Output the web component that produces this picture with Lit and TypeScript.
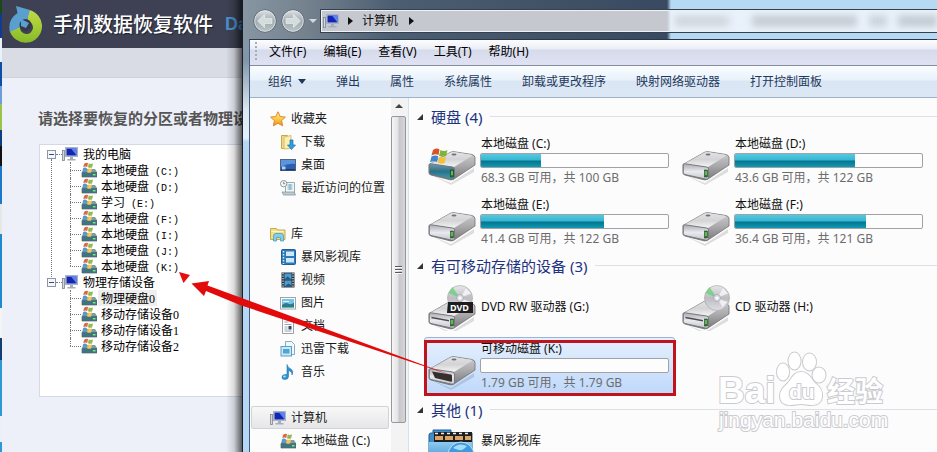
import { LitElement, html, svg, css, nothing, TemplateResult } from "lit";
import { customElement } from "lit/decorators.js";
import { classMap } from "lit/directives/class-map.js";
import { styleMap } from "lit/directives/style-map.js";

type Icon = () => TemplateResult;

const small = (body: TemplateResult) =>
  html`<svg class="i16" viewBox="0 0 16 16" aria-hidden="true">${body}</svg>`;
const large = (body: TemplateResult) =>
  html`<svg class="i48" viewBox="0 0 48 48" aria-hidden="true">${body}</svg>`;

const computer: Icon = () => small(svg`
  <rect x=".5" y="4.5" width="2" height="10" fill="#d5d9dc" stroke="#7c858d" stroke-width=".8"/>
  <rect x="3.5" y="1.5" width="12" height="9" fill="#c9d0dc" stroke="#aab3c4"/>
  <rect x="4.5" y="2.5" width="10" height="7" fill="#1424b4"/>
  <path d="M9 2.5h5.500v7z" fill="#5a84ec"/>
  <path d="M8 11h3v2h2.500v1.500h-8v-1.500H8z" fill="#a5adba"/>`);

const winDrive: Icon = () => small(svg`
  <path d="M1 10l3-3h10l2 3v5H1z" fill="#7f9ca6"/>
  <path d="M1 10.500h15v4.500H1z" fill="#3e7583" stroke="#55646b" stroke-width=".7"/>
  <rect x="12" y="12" width="2.500" height="1.500" fill="#6df06c"/>
  <path d="M3 2q2-2 4-1l-.7 4q-2-1-4 .3z" fill="#d96a45"/>
  <path d="M7.700 1.300q2 1.200 4.300 0l-.8 4q-2 1-4.200 0z" fill="#94b656"/>
  <path d="M2 6.200q2-1.200 4 0l-.7 4q-2-1-4 0z" fill="#5b97cf"/>
  <path d="M6.800 6.300q2 1 4.300 0l-.8 4q-2 1-4.200 0z" fill="#ecc955"/>`);

const star: Icon = () => small(svg`
  <path d="M8 .8l2.200 4.700 5.200.6-3.800 3.500 1 5.200L8 12.200l-4.600 2.600 1-5.200L.6 6.100l5.200-.6z" fill="url(#gold)" stroke="#dd8a2c"/>`);

const downloads: Icon = () => small(svg`
  <path d="M1.500 1.500h6l1 1.500v11.500h-7z" fill="#f1dc86" stroke="#c7a94c"/>
  <path d="M4 3l7-1.500v13L4 15z" fill="#faeeb0" stroke="#d0b45c" stroke-width=".8"/>
  <path d="M10 6h3v5h2.500l-4 4.500-4-4.500H10z" fill="#2f9fe0" stroke="#1b6fb0" stroke-width=".7"/>`);

const desktop: Icon = () => small(svg`
  <rect x=".5" y="2.500" width="15" height="11" fill="#2a5fb4" stroke="#53657c"/>
  <path d="M1 3h14v4Q8 6 1 10z" fill="#5c95dc"/>
  <path d="M1 12h14v1.500H1z" fill="#1b3a6c"/>
  <rect x="2" y="9.500" width="3.500" height="3" fill="#a9d4f5"/>`);

const recent: Icon = () => small(svg`
  <path d="M5.500 2.500h9v11h-9z" fill="#f2f7f9" stroke="#9aa8b0"/>
  <path d="M7.500 5h5M7.500 7h5M7.500 9h5M10 4v6" stroke="#6fa5bd" stroke-width=".9"/>
  <path d="M2 12h12l1.500 3H3.500z" fill="#c1cbd0" stroke="#8b979d" stroke-width=".8"/>
  <circle cx="3.700" cy="3.700" r="3.200" fill="#f7f9fa" stroke="#8e989e"/>
  <path d="M3.700 1.800v2h1.500" fill="none" stroke="#56646e" stroke-width=".8"/>`);

const library: Icon = () => small(svg`
  <path d="M.5 2.500h6l1 1.500h7.500v9.500H.5z" fill="#f3df86" stroke="#c5ab50"/>
  <path d="M1.500 5.500h12" stroke="#fff6c8"/>
  <path d="M3.500 15V10q0-2.500 2.500-2.500h5q2.500 0 2.500 2.500v5h-3v-3.500h-4V15z" fill="#86cdea" stroke="#4d9cc2" stroke-width=".8"/>`);

const filmBlue: Icon = () => small(svg`
  <rect x="1.500" y=".5" width="14" height="15" rx="1" fill="#2d7ab8" stroke="#215f94"/>
  <path d="M3.500 2v13" stroke="#d5ecfa" stroke-width="1.500" stroke-dasharray="1.500 1.500"/>
  <path d="M6 2.500h8v4.500H6zM6 9h8v4.500H6z" fill="#cfe8f8"/>`);

const film: Icon = () => small(svg`
  <rect x="1.500" y=".5" width="13" height="15" fill="#26323e"/>
  <path d="M3 1v14M13 1v14" stroke="#e6edf2" stroke-width="1.200" stroke-dasharray="1.300 1.200"/>
  <path d="M4.500 1.500h7v6h-7zM4.500 8.500h7v6h-7z" fill="#4b9bd0"/>
  <path d="M4.500 7.500l3-3 4 3zM4.500 14.500l4-3 3 2v1z" fill="#1f587f"/>`);

const picture: Icon = () => small(svg`
  <rect x=".5" y="2.500" width="15" height="11.500" fill="#fff" stroke="#9aa6ac"/>
  <rect x="2" y="4" width="12" height="8.500" fill="#78c4e2"/>
  <path d="M2 10q4-3 6-1.500T14 8v4.500H2z" fill="#2c7c86"/>
  <path d="M3 6.500h6" stroke="#e2f5fb"/>`);

const doc: Icon = () => small(svg`
  <path d="M2.500.5h8l3 3v12h-11z" fill="#fdfdfd" stroke="#98a1a7"/>
  <path d="M4.500 4h4M4.500 6.500h7M4.500 9h3M4.500 11h3M4.500 13h7" stroke="#94a4b4"/>
  <rect x="8.500" y="8" width="3" height="3.500" fill="#31435b"/>`);

const thunder: Icon = () => small(svg`
  <path d="M5.500.5h6l3 3v10h-9z" fill="#eff8fc" stroke="#86adbf"/>
  <rect x="1" y="5.500" width="10.500" height="9.500" fill="#cbe8f5" stroke="#5e9dbc"/>
  <rect x="3" y="8" width="6.500" height="4.500" fill="#4aa6d8"/>`);

const music: Icon = () => small(svg`
  <path d="M7 .5q.5 3 4 4.500 3 2 1 6 .3-3.500-3.500-4.500v6q-.2 3-3.500 3T2 13q0-2.500 3.500-2.500H7z" fill="#2e93d2" stroke="#2374b0" stroke-width=".6"/>
  <ellipse cx="4.500" cy="12.500" rx="1.500" ry="1" fill="#9bd7f4"/>`);

const driveBody = (front = "url(#front)") => svg`
  <path d="M3 38l20 8 23-15v4L23 48z" fill="#000" opacity=".12"/>
  <path d="M1 27.500L22 15.500q2-1 4-.8l18 2.800q3 1 3 3v7.500L26 42q-2 1.300-4 .8L3 38q-2-.6-2-2z" fill="url(#side)" stroke="#6e6e70" stroke-width=".8"/>
  <path d="M2 27L22 15.800q2-1 4-.8l17.500 2.700q1.500.6 0 1.600L26 30z" fill="url(#lid)"/>
  <path d="M1.300 27.500q0-1 2-.7L24.500 30q2 .3 2 2v8.500q0 2-2.500 1.700L3 37.500q-1.700-.5-1.700-2z" fill="${front}" stroke="#737377" stroke-width=".9"/>
  <ellipse cx="26" cy="17.500" rx="2.500" ry="1" fill="#6f7174"/>`;
const led = svg`<rect x="22.500" y="33" width="3" height="7" fill="#2f7b2c" stroke="#16351a" stroke-width=".5"/><rect x="23.500" y="34" width="1" height="4" fill="#93f37b"/>`;
const slot = svg`<path d="M3.500 31.500l17.500 3.300" stroke="#4d4d52" stroke-width="1.500"/>`;
const disc = (x: number, y: number, r: number) => svg`
  <circle cx="${x}" cy="${y}" r="${r}" fill="url(#disc)" stroke="#aaa" stroke-width=".7"/>
  <path d="M${x} ${y}l-${r - 1}-5 4-6z" fill="#62d274" opacity=".75"/>
  <path d="M${x} ${y}l6-${r - 3} 5 5z" fill="#fff" opacity=".7"/>
  <path d="M${x} ${y}l${r - 2} 4-5 5z" fill="#fff" opacity=".7"/>
  <circle cx="${x}" cy="${y}" r="3.500" fill="#d9dce6" stroke="#999" stroke-width=".6"/>
  <circle cx="${x}" cy="${y}" r="1.500" fill="#fff"/>`;

const drive: Icon = () => large(svg`${driveBody()}${led}`);
const systemDrive: Icon = () => large(svg`${driveBody("url(#teal)")}${led}
  <path d="M5 13q4-2.500 6.500-.5L10.500 18q-3-1.500-7 .5z" fill="#dd5126"/>
  <path d="M12.500 13q3.500 1.800 7 .2L18 19q-3.500 1.500-7-.2z" fill="#7db53c"/>
  <path d="M3.500 19.500q4-2 6.800-.3L9 25q-3.500-1.700-7 .3z" fill="#3f86d2"/>
  <path d="M11 19.800q3.500 1.700 7 .2L16.500 26q-3.500 1.500-6.700-.5z" fill="#f4c036"/>`);
const dvdDrive: Icon = () => large(svg`
  <g transform="translate(0 3)">${driveBody()}${led}${slot}</g>
  ${disc(32, 15, 12.500)}
  <path d="M20 19h25v11H19z" fill="#1d1d1f"/>
  <text class="dvd" x="22" y="28">DVD</text>`);
const cdDrive: Icon = () => large(svg`
  <g transform="translate(0 3)">${driveBody()}${led}${slot}</g>${disc(35, 15, 12.500)}`);
const usbDrive: Icon = () => large(svg`${driveBody()}
  <path d="M4 29.500l19 3q1 .2 1 1.500v5q0 1-1 .7L7 36z" fill="#35302f"/>`);
const filmFolder: Icon = () => large(svg`
  <path d="M1 6q0-2 2-2h2V1h18v3h21v44H1z" fill="#3f8ccb" stroke="#225d92"/>
  <rect x="6" y="3" width="38" height="10" fill="#1d1f22"/>
  <path d="M7 4.500h36" stroke="#eee" stroke-width="1.500" stroke-dasharray="3 3"/>
  <path d="M7 7h8v4H7zM17 7h8v4h-8zM27 7h8v4h-8zM37 7h6v4h-6z" fill="#dba565"/>
  <path d="M1 13h43v35H1z" fill="url(#blueFolder)"/>
  <circle cx="33" cy="26" r="13" fill="#3f9ade" stroke="#bfe3f8"/>
  <path d="M25 19q6-6 14-2-4 5-8 4t-6-2zM30 26q8-3 13 0-4 7-9 8z" fill="#a5dcf5"/>`);

interface TreeNode { name: string; ascii: string; digit?: boolean; selected?: boolean; }
const tree: { name: string; children: TreeNode[] }[] = [
  { name: "我的电脑", children: [
    { name: "本地硬盘", ascii: " (C:)" }, { name: "本地硬盘", ascii: " (D:)" },
    { name: "学习", ascii: " (E:)" }, { name: "本地硬盘", ascii: " (F:)" },
    { name: "本地硬盘", ascii: " (I:)" }, { name: "本地硬盘", ascii: " (J:)" },
    { name: "本地硬盘", ascii: " (K:)" } ] },
  { name: "物理存储设备", children: [
    { name: "物理硬盘", ascii: "0", digit: true, selected: true }, { name: "移动存储设备", ascii: "0", digit: true },
    { name: "移动存储设备", ascii: "1", digit: true }, { name: "移动存储设备", ascii: "2", digit: true } ] },
];

const places: { name: string; icon: Icon; current?: boolean; items: [string, Icon][] }[] = [
  { name: "收藏夹", icon: star, items: [["下载", downloads], ["桌面", desktop], ["最近访问的位置", recent]] },
  { name: "库", icon: library, items: [["暴风影视库", filmBlue], ["视频", film], ["图片", picture], ["文档", doc], ["迅雷下载", thunder], ["音乐", music]] },
  { name: "计算机", icon: computer, current: true, items: [["本地磁盘 (C:)", winDrive]] },
];

interface Device { name: string; icon: Icon; used?: number; info?: string; marked?: boolean; top?: boolean; }
const groups: { title: string; items: Device[] }[] = [
  { title: "硬盘 (4)", items: [
    { name: "本地磁盘 (C:)", icon: systemDrive, used: 32, info: "68.3 GB 可用，共 100 GB" },
    { name: "本地磁盘 (D:)", icon: drive, used: 64, info: "43.6 GB 可用，共 122 GB" },
    { name: "本地磁盘 (E:)", icon: drive, used: 66, info: "41.4 GB 可用，共 122 GB" },
    { name: "本地磁盘 (F:)", icon: drive, used: 70, info: "36.4 GB 可用，共 121 GB" } ] },
  { title: "有可移动存储的设备 (3)", items: [
    { name: "DVD RW 驱动器 (G:)", icon: dvdDrive },
    { name: "CD 驱动器 (H:)", icon: cdDrive },
    { name: "可移动磁盘 (K:)", icon: usbDrive, used: 0, info: "1.79 GB 可用，共 1.79 GB", marked: true } ] },
  { title: "其他 (1)", items: [{ name: "暴风影视库", icon: filmFolder, top: true }] },
];

@customElement("app-root")
export class AppRoot extends LitElement {
  static styles = css`
    :host { display: block; height: 100vh; overflow: hidden; position: relative;
      font: 12px/16px "Noto Sans", "Noto Sans CJK SC", sans-serif; color: #111; }
    * { box-sizing: border-box; }
    button { font: inherit; color: inherit; background: none; border: 0; padding: 0; margin: 0; white-space: nowrap; }
    a { color: inherit; text-decoration: none; }
    ul { list-style: none; margin: 0; padding: 0; }
    h1, h2, p { margin: 0; }
    svg { display: block; flex: none; }
    .i16 { width: 16px; height: 16px; }
    .i48 { width: 48px; height: 48px; }
    .defs { position: absolute; width: 0; height: 0; }
    .desk { display: flex; height: 100%; }

    .recovery { position: relative; flex: 0 0 242px; overflow: hidden; display: flex; }
    .recovery::after { content: ""; position: absolute; inset: 0 0 0 auto; width: 16px;
      background: linear-gradient(90deg, transparent, rgba(0,0,0,.14) 50%, rgba(0,0,0,.62)); }
    .strip { flex: 0 0 2px; background: linear-gradient(#174a18 0 14px, #123a8e 14px 38px, #e9f1fa 38px 62px, #0e4ea8 62px 86px,
      #6b9fd6 86px 104px, #9bc34a 104px 130px, #0d3f80 130px 146px, #111 146px 166px, #1c78c8 166px 204px, #e6e6e6 204px 234px,
      #1d8ad0 234px 308px, #f4f4f4 308px 338px, #123f70 338px 360px, #2b9ad4 360px 416px, #e9f0f8 416px 442px, #2b9ad4 442px); }
    .window { flex: 1; min-width: 0; background: #edf0f9; }
    .brand { display: flex; align-items: center; height: 48px; padding-left: 6px; background: #3d4153; color: #fff; white-space: nowrap; }
    .logo { width: 34px; height: 38px; margin-right: 11px; }
    .brand h1 { font: 500 20px/28px "Noto Sans CJK SC", sans-serif; text-shadow: 1px 1px 1px #1d2030; }
    .brand .en { margin-left: 12px; font: bold 18px/28px "Liberation Sans", sans-serif; color: #4b91cb; }
    .band { height: 30px; background: #dadce5; border-bottom: 1px solid #cfd2dc; }
    .prompt { padding: 28px 0 0 36px; font: bold 15px/24px "Noto Sans CJK SC", sans-serif; color: #555; white-space: nowrap; }
    .tree { margin: 14px 0 0 37px; height: 253px; padding: 1px 0 0 7px; background: #fff; border: 1px solid #d2dae8; border-right: 0;
      font: 12px/16px "Noto Sans CJK SC", sans-serif; color: #000; white-space: nowrap; }
    .branch { position: relative; }
    .branch:not(:last-child)::before { content: ""; position: absolute; left: 4px; top: 13px; bottom: -3px; border-left: 1px dotted #777; }
    .root { display: flex; align-items: center; height: 16px; }
    .fold { display: flex; align-items: center; justify-content: center; width: 9px; height: 9px; border: 1px solid #8b96a8; background: #f6f6f4; }
    .fold::before { content: ""; width: 5px; height: 1px; background: #2c49a0; }
    .dots { width: 6px; border-top: 1px dotted #777; }
    .name { height: 16px; padding: 0 2px 0 3px; margin-left: 2px; white-space: pre; }
    .kids { margin-left: 23px; }
    .kids .name { margin-left: 1px; }
    .kids li { position: relative; display: flex; align-items: center; height: 16px; }
    .kids li::before { content: ""; width: 11px; border-top: 1px dotted #777; }
    .kids li::after { content: ""; position: absolute; left: 0; top: 0; height: 16px; border-left: 1px dotted #777; }
    .kids li:last-child::after { height: 8px; }
    .kids .selected { background: #eee; }
    .mono { font: 10px/12px "Liberation Mono", monospace; }
    .digit { font: 12px/12px "Liberation Serif", serif; }

    .explorer { flex: 1; min-width: 0; display: flex; flex-direction: column; border-left: 1px solid #16202b;
      background: linear-gradient(#5e6c7c, #8998a5 30px, #8395a6 60px, #dbe7f1 110px, #e4eff9 138px, #b7d6f3 142px); }
    .glass { flex: none; display: flex; align-items: center; height: 39px; padding: 2px 0 0 10px;
      background: linear-gradient(90deg, #8796a3, #76838f 60px, #4c5e72 150px, #39495f 424px, #b7daf4 428px); }
    .nav { display: flex; gap: 4px; }
    .nav svg { width: 24px; height: 24px; border-radius: 12px; }
    .caret { border: 4px solid transparent; border-top-color: #d3dade; border-bottom: 0; margin: 0 3px 0 4px; }
    .address { flex: 1; min-width: 0; display: flex; align-items: center; height: 24px; padding-left: 2px; overflow: hidden;
      border: 1px solid #344150; border-right: 0; box-shadow: inset 1px 1px #eef2f5, inset 0 -1px #eef2f5;
      background: linear-gradient(90deg, #c5c8cf 346px, #e9f2fb 350px); }
    .crumb { margin: 0 11px 0 9px; }
    .chev { border: 4px solid transparent; border-left: 5px solid #111; border-right: 0; margin-left: 9px; }
    .chev.last { margin-left: 0; }
    .ghost { margin-left: auto; width: 262px; height: 12px; filter: blur(3px);
      background: linear-gradient(90deg, #d2d9e0 50px, transparent 58px 74px, #c8cfd6 80px 180px, transparent 184px 192px, #cdd5dc 196px 210px, transparent 214px 220px, #c5cdd5 226px); }
    .client { flex: 1; min-height: 0; display: flex; flex-direction: column; margin-left: 6px; border-left: 1px solid #3c5c85; border-top: 1px solid #27384c; background: #fcfcfc; }
    .menu { flex: none; display: flex; align-items: center; gap: 17px; height: 26px; padding: 0 0 2px 5px; color: #000;
      background: linear-gradient(#fdfdfe, #e9edf6 9px, #d6dbec 10px, #dfe2f2); border-bottom: 1px solid #848b9d; }
    .grip { width: 2px; height: 20px; margin-right: -5px; background: repeating-linear-gradient(#a5acba 0 2px, transparent 2px 4px); }
    .tools { flex: none; display: flex; align-items: center; gap: 30px; height: 32px; padding-left: 18px; color: #1e395b;
      background: linear-gradient(#fafdff, #e8f1fb 14px, #dbe6f4 15px, #dce7f5); border-bottom: 1px solid #9fb0c9; }
    .org { display: flex; align-items: center; gap: 6px; }
    .org::after { content: ""; border: 4px solid transparent; border-top: 5px solid #1e395b; border-bottom: 0; }
    .body { flex: 1; min-height: 0; display: flex; }
    .side { flex: 0 0 141px; padding-top: 9px; overflow: hidden; color: #1a1a1a; }
    .side ul { margin-bottom: 23px; }
    .side a { display: flex; align-items: center; gap: 5px; height: 23px; padding-left: 30px; white-space: nowrap; }
    .side .head { padding-left: 20px; }
    .side .current { margin: 0 2px 0 1px; padding-left: 18px; border: 1px solid #d3d3d6; border-radius: 2px; background: linear-gradient(#f8f8f8, #e6e6e8); }
    .scroll { flex: 0 0 18px; display: flex; flex-direction: column; border-right: 1px solid #d5e1ee; padding: 6px 2px 0 0; background: #f3f3f4; align-items: stretch; }
    .up { align-self: center; border: 4px solid transparent; border-top: 0; border-bottom: 4px solid #444; margin-bottom: 8px; }
    .thumb { display: flex; align-items: center; justify-content: center; height: 307px; border: 1px solid #96979a; border-radius: 2px;
      background: linear-gradient(90deg, #f5f5f5, #e4e4e6 45%, #c6c7cb 55%, #d5d6d9); }
    .thumb::before { content: ""; width: 7px; height: 8px; background: repeating-linear-gradient(#55585e 0 1px, #fff 1px 2px, transparent 2px 3px); }
    .main { flex: 1; min-width: 0; padding: 5px 0 0 15px; overflow: hidden; }
    .group h2 { display: flex; align-items: center; gap: 8px; height: 27px; margin-left: -7px; font: 15px/24px "Noto Sans", "Noto Sans CJK SC", sans-serif; color: #1e3380; white-space: nowrap; }
    .group h2::before { content: ""; border: 3px solid transparent; border-right-color: #333; border-bottom-color: #333; }
    .group h2::after { content: ""; flex: 1; height: 1px; background: #dfe0e6; }
    .tiles { display: grid; grid-template-columns: 254px 254px; }
    .tile { position: relative; display: flex; align-items: center; gap: 4px; height: 61px; padding-left: 4px; }
    .tile.plain { height: 56px; }
    .tile.top { align-items: flex-start; padding-top: 6px; }
    .tile.top p { margin-top: 4px; }
    .tile.marked::before { content: ""; position: absolute; inset: 2px 3px 0 0; border: 1px solid #9ab5d8; border-radius: 3px; background: linear-gradient(#e6f0fd, #bed8fb); }
    .tile.marked::after { content: ""; position: absolute; inset: 5px 2px 0 0; border: 3px solid #c0141c; }
    .tile > * { position: relative; }
    .label { white-space: nowrap; }
    .info { color: #6c6c6c; margin-top: 1px; padding-left: 1px; }
    .label p:first-child { padding-left: 1px; }
    .bar { width: 189px; height: 15px; margin-top: 1px; margin-bottom: 2px; border: 1px solid #a2a2a6; border-radius: 2px; background: #fdfdfd; overflow: hidden; }
    .fill { height: 100%; background: linear-gradient(#57c8de, #36b6d2 6px, #05748f 7px, #109ab3); }
    .dvd { font: bold 9px "Noto Sans", sans-serif; fill: #fff; }

    .arrow { position: absolute; left: 170px; top: 262px; width: 290px; height: 120px; pointer-events: none; }
    .mark { position: absolute; left: 715px; top: 345px; width: 176px; height: 90px; pointer-events: none; fill: #fff; stroke: #cbcbcf; stroke-width: 2; paint-order: stroke; }
    .bai { font: bold 37px "Liberation Sans", sans-serif; }
    .du { font: bold 21px "Liberation Sans", sans-serif; }
    .jy { font: bold 28px "Noto Sans CJK SC", sans-serif; }
    .url { font: 21px "Liberation Sans", sans-serif; }
  `;

  private defs() {
    const grad = (id: string, a: string, b: string, c: string) => svg`
      <linearGradient id=${id} x1="0" y1="0" x2="0" y2="1"><stop offset="0" stop-color=${a}/><stop offset=".5" stop-color=${b}/><stop offset="1" stop-color=${c}/></linearGradient>`;
    return html`<svg class="defs" aria-hidden="true"><defs>
      ${grad("gold", "#fff0a0", "#fccb45", "#f08a24")}
      ${grad("side", "#cfcfd0", "#a9a9ac", "#77777a")}
      ${grad("lid", "#e2e2e4", "#d4d4d6", "#f4f4f4")}
      ${grad("front", "#a9a9b0", "#e9e9f0", "#c6c6cd")}
      ${grad("teal", "#6f9aab", "#2b7188", "#3aa0b4")}
      ${grad("disc", "#e8e8ec", "#bcbcc2", "#dedee4")}
      ${grad("blueFolder", "#8fcbf0", "#4597d8", "#2f7fc4")}
      ${grad("orb", "#dfe4e6", "#a1abb0", "#b9c6c6")}
      ${grad("lime", "#c3d94a", "#a5cc35", "#87b92a")}
    </defs></svg>`;
  }

  private recovery() {
    return html`<section class="recovery">
      <div class="strip"></div>
      <div class="window">
        <header class="brand">
          <svg class="logo" viewBox="0 0 34 38" aria-hidden="true">
            <path d="M21 5A16.500 16.500 0 1 1 1.500 25L12 22a6.500 6.500 0 1 0 7-6z" fill="url(#lime)"/>
            <path d="M8 1l14 4-3 10q-6 0-7.500 7.500L2 27Q-1 15 9.500 8z" fill="#5b9fd0"/>
            <circle cx="17.500" cy="20" r="6" fill="#34394a"/>
            <path d="M13 14l8 4-3 5-5-2z" fill="#5b9fd0"/>
          </svg>
          <h1>手机数据恢复软件</h1><span class="en">Da</span>
        </header>
        <div class="band"></div>
        <p class="prompt">请选择要恢复的分区或者物理设</p>
        <div class="tree">
          ${tree.map((b) => html`<div class="branch">
            <div class="root"><button class="fold" aria-label="折叠"></button><span class="dots"></span>${computer()}<span class="name">${b.name}</span></div>
            <ul class="kids">${b.children.map((k) => html`<li>${winDrive()}<span class=${classMap({ name: true, selected: !!k.selected })}>${k.name}<span class=${k.digit ? "digit" : "mono"}>${k.ascii}</span></span></li>`)}</ul>
          </div>`)}
        </div>
      </div>
    </section>`;
  }

  private orb(flip: boolean) {
    return html`<button aria-label=${flip ? "前进" : "后退"}><svg viewBox="0 0 24 24" aria-hidden="true">
      <circle cx="12" cy="12" r="11.300" fill="url(#orb)" stroke="#596773"/>
      <circle cx="12" cy="12" r="10.300" fill="none" stroke="#dfe5e8" stroke-width=".8"/>
      <path transform=${flip ? "rotate(180 12 12)" : "rotate(0)"} d="M4.500 12l7-6.500v4H19v5h-7.500v4z" fill="#d5dcde" stroke="#eef2f3" stroke-width=".6"/>
    </svg></button>`;
  }

  private tile(d: Device) {
    const cls = { tile: true, plain: d.used === undefined && !d.top, top: !!d.top, marked: !!d.marked };
    return html`<div class=${classMap(cls)}>${d.icon()}
      <div class="label"><p>${d.name}</p>
        ${d.used === undefined ? nothing : html`
          <div class="bar" role="meter" aria-label=${d.name} aria-valuemin="0" aria-valuemax="100" aria-valuenow=${d.used}>
            <div class="fill" style=${styleMap({ width: `${d.used}%` })}></div></div>
          <p class="info">${d.info}</p>`}
      </div></div>`;
  }

  private explorer() {
    return html`<section class="explorer">
      <header class="glass">
        <div class="nav">${this.orb(false)}${this.orb(true)}</div><span class="caret"></span>
        <div class="address">${computer()}<span class="chev"></span><button class="crumb">计算机</button><span class="chev last"></span><span class="ghost"></span></div>
      </header>
      <div class="client">
        <nav class="menu"><span class="grip"></span>${["文件(F)", "编辑(E)", "查看(V)", "工具(T)", "帮助(H)"].map((m) => html`<button>${m}</button>`)}</nav>
        <div class="tools"><button class="org">组织</button>${["弹出", "属性", "系统属性", "卸载或更改程序", "映射网络驱动器", "打开控制面板"].map((m) => html`<button>${m}</button>`)}</div>
        <div class="body">
          <nav class="side">${places.map((p) => html`<ul>
            <li><a href="#" class=${classMap({ head: true, current: !!p.current })}>${p.icon()}${p.name}</a></li>
            ${p.items.map(([n, icon]) => html`<li><a href="#">${icon()}${n}</a></li>`)}</ul>`)}</nav>
          <div class="scroll"><span class="up"></span><span class="thumb"></span></div>
          <main class="main">${groups.map((g) => html`<section class="group"><h2>${g.title}</h2>
            <div class="tiles">${g.items.map((d) => this.tile(d))}</div></section>`)}</main>
        </div>
      </div>
    </section>`;
  }

  render() {
    return html`${this.defs()}
      <div class="desk">${this.recovery()}${this.explorer()}</div>
      <svg class="mark" viewBox="0 0 176 90" aria-hidden="true">
        <text class="bai" x="3" y="58">Bai</text>
        <ellipse cx="68" cy="27" rx="6" ry="8.500"/><ellipse cx="79.500" cy="16" rx="6" ry="8.500"/>
        <ellipse cx="94.500" cy="17" rx="6.500" ry="8.500"/><ellipse cx="104" cy="30" rx="6.500" ry="7.500"/>
        <path d="M86 27c8 0 10 7 14 11 5 4 8 8 7 14-1 7-6 8-11 8-4 0-6-1-10-1s-6 1-10 1c-6 0-11-2-11-9 0-6 4-9 8-13 4-5 6-11 13-11z"/>
        <text class="du" x="74" y="54">du</text>
        <text class="jy" x="112" y="57">经验</text>
        <text class="url" x="4" y="82">jingyan.baidu.com</text>
      </svg>
      <svg class="arrow" viewBox="170 262 290 120" aria-hidden="true">
        <path d="M179 272l11 3-6.500 8z" fill="#e80c0c"/>
        <path d="M191.500 283.500L209 281l-1.500 4.500L452 375.500 240 305l-34-14-2 5z" fill="#e20a0a"/>
      </svg>`;
  }
}
